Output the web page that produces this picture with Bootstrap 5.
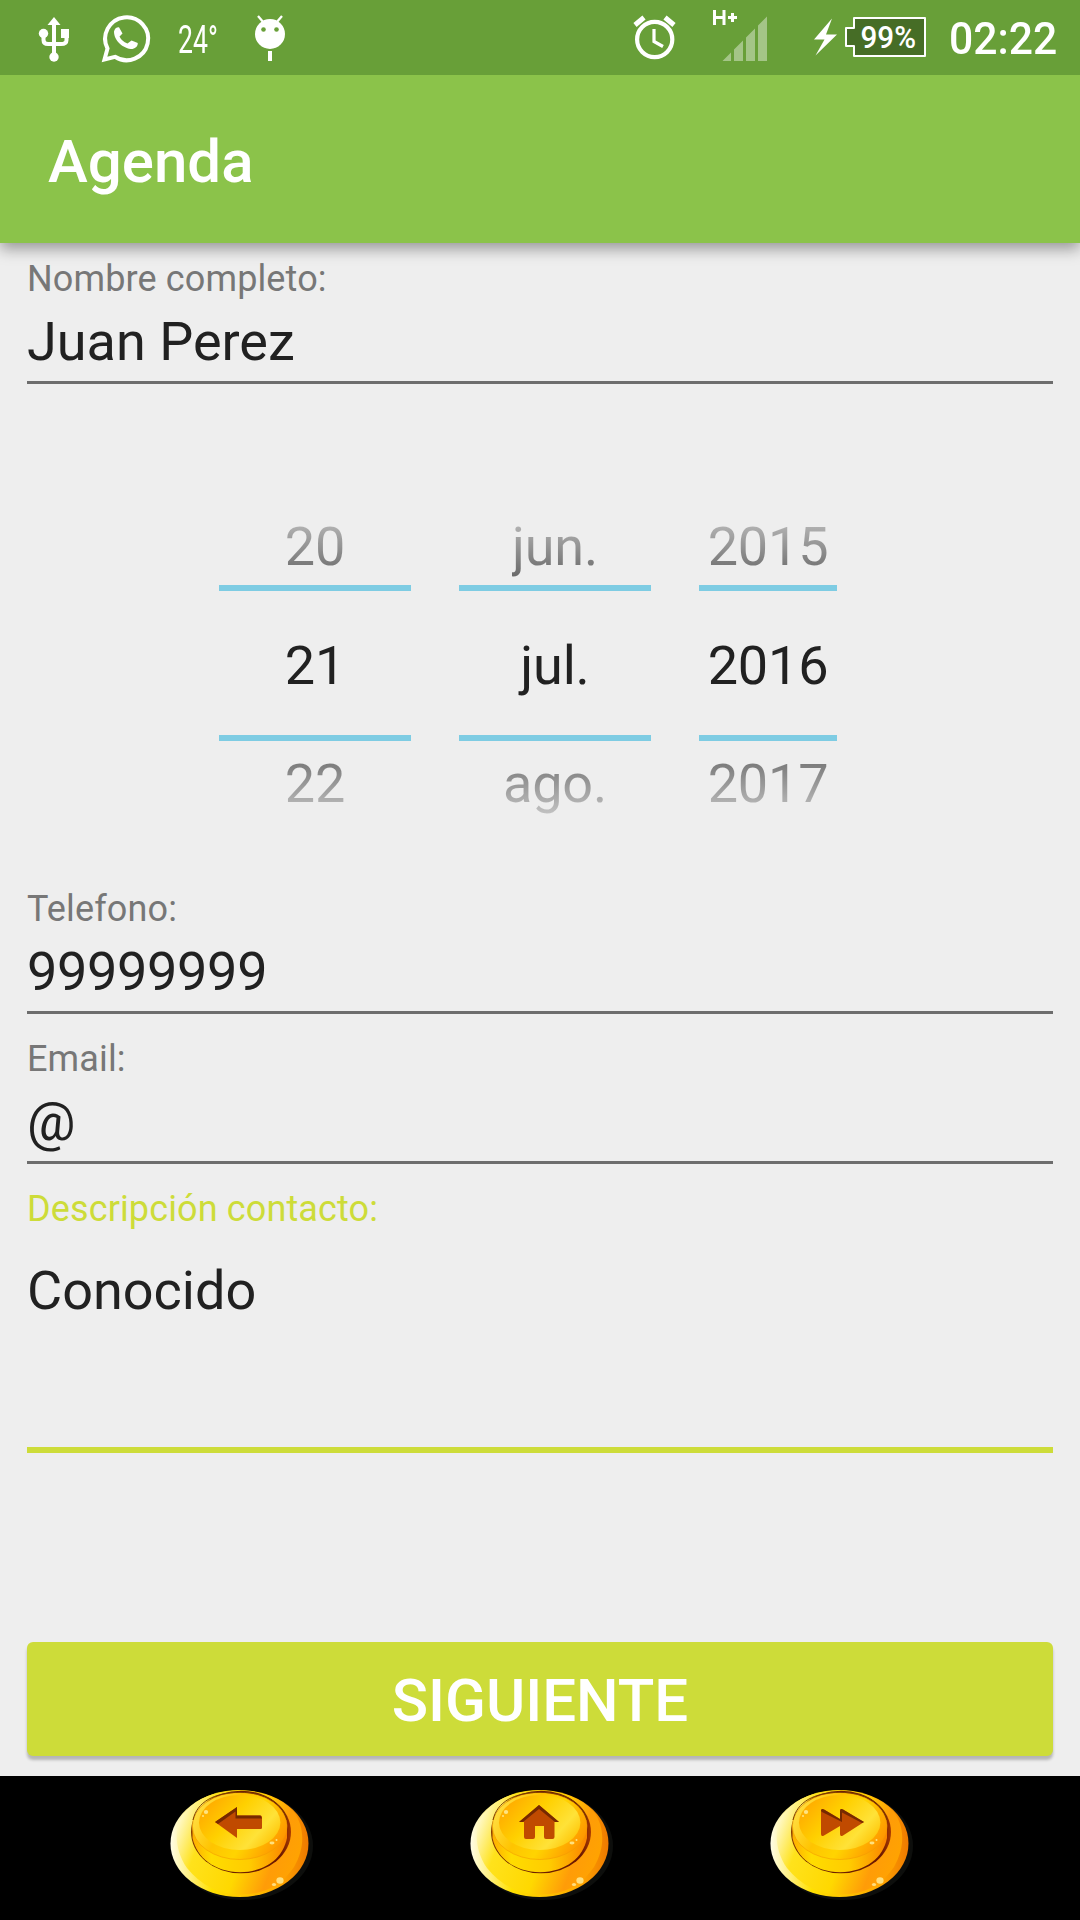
<!DOCTYPE html>
<html lang="es">
<head>
<meta charset="utf-8">
<meta name="viewport" content="width=device-width, initial-scale=1">
<title>Agenda</title>
<link href="https://cdn.jsdelivr.net/npm/bootstrap@5.3.0/dist/css/bootstrap.min.css" rel="stylesheet">
<style>
body{font-family:Roboto,sans-serif;background:#eee;color:#212121;width:1080px;height:1920px;overflow:hidden}
svg{display:block;flex:none}
.statusbar{height:75px;background:#689f38;color:#fff;z-index:3}
.temp{font-size:38px;line-height:75px;width:36px}
.temp span{display:inline-block;transform:scaleX(.7);transform-origin:0 50%;padding-top:3px}
.clock{font-size:44px;font-weight:500;line-height:75px;padding-top:2px}
.clock span{display:inline-block;transform:scaleX(.97);transform-origin:0 50%}
.appbar{height:168px;background:#8bc34a;padding-left:48px;box-shadow:0 6px 14px rgba(0,0,0,.36);z-index:2}
.appbar h1{font-size:60px;line-height:70px;font-weight:500;padding-top:6px}
.main-form{height:1533px;padding:0 27px}
.fld{height:150px;padding-top:15px}
.fld label{display:block;font-size:36px;line-height:42px;color:#777;letter-spacing:.13px}
.fld .form-control{font-size:54px;line-height:64px;height:84px;padding:2px 0 0;border:0;border-bottom:3px solid #6d6d6d;border-radius:0;background:transparent;color:#212121;box-shadow:none}
.fld .digits{letter-spacing:-.33px}
.first-field{height:141px}
.picker{height:489px;gap:48px;padding:100px 0 0 192px}
.wheel{width:192px;height:360px;font-size:54px;text-align:center;letter-spacing:-.2px}
.wheel.year{width:138px}
.wheel div{height:101px;line-height:64px}
.wheel .prev{padding-top:31px}
.wheel .sel{height:156px;border:solid #7ecce3;border-width:6px 0;padding-top:43px}
.wheel .next{padding-top:11px}
.wheel .prev span,.wheel .next span{display:inline-block;background-clip:text;-webkit-background-clip:text;color:transparent}
.wheel .prev span{background-image:linear-gradient(#c0c0c0,#666)}
.wheel .next span{background-image:linear-gradient(#6c6c6c,#c4c4c4)}
.fld.active{height:300px}
.fld.active label{color:#cddc39}
.fld.active .form-control{height:223px;border-bottom:6px solid #cddc39;padding-top:29px;resize:none;overflow:hidden}
.action{padding-top:169px}
.btn.btn-next{height:114px;background:#cddc39;color:#fff;font-size:60px;font-weight:500;line-height:60px;border:0;border-radius:6px;box-shadow:0 4px 3px rgba(0,0,0,.24);padding:4px 0 0}
.navbtns{height:144px;background:#000}
</style>
<script src="https://cdn.jsdelivr.net/npm/bootstrap@5.3.0/dist/js/bootstrap.bundle.min.js"></script>
</head>
<body class="d-flex flex-column">
<header class="statusbar d-flex flex-shrink-0 overflow-hidden position-relative">
  <svg width="178" height="75" viewBox="0 0 178 75" fill="none" stroke="#fff">
    <path d="M54 22V56M43.500 35V40Q43.500 44 48 44H61Q66.500 44 66.500 40V35" stroke-width="4"/>
    <path d="M54 17l6.500 8h-13z" fill="#fff" stroke="none"/><circle cx="43.500" cy="33.500" r="4.700" fill="#fff" stroke="none"/><circle cx="54" cy="57" r="4.700" fill="#fff" stroke="none"/><path d="M61 29h8v9h-8z" fill="#fff" stroke="none"/>
    <path d="M104.500 59.500l3-11A21.500 21.500 0 1 1 115 56.800z" stroke-width="4" stroke-linejoin="miter"/>
    <path d="M119 27.200Q115 27 114 31.500C114 41 123.500 49 132.500 49Q138 47.500 137.800 43L131.500 40.500L127.500 43.500Q121.500 41 119.500 36.500L122.500 33.500Z" fill="#fff" stroke="none"/>
  </svg>
  <div class="temp"><span>24°</span></div>
  <svg width="406" height="75" viewBox="214 0 406 75" fill="none" stroke="#fff"><circle cx="270" cy="34" r="15" fill="#fff" stroke="none"/><path d="M258 16l6 7M282 16l-6 7" stroke-width="2.300"/><path d="M270 51V61" stroke-width="4"/><g fill="#689f38" stroke="none"><circle cx="263.500" cy="29.500" r="2.300"/><circle cx="276.500" cy="29.500" r="2.300"/></g></svg>
  <svg width="329" height="75" viewBox="620 0 329 75" fill="none" stroke="#fff">
    <circle cx="654.700" cy="39.500" r="17.600" stroke-width="4.200"/><path d="M654 29V41.500L663 46.500" stroke-width="3.200"/><path d="M635 25l9-7.500M674 25l-9-7.500" stroke-width="5"/>
    <path d="M714.500 10V25M724 10V25M714.500 17.500h9.500M728 17.500h9M732.500 13v9" stroke-width="3"/>
    <path d="M722.500 61l8.500-8.500V61zM734 49.500l9-9V61h-9zM746 37.500l9-9V61h-9zM758 25.500l9-9V61h-9z" fill="#a4c587" stroke="none"/>
    <path d="M832 18.500L814 39.500h10.500L815.500 55.500L837 34.500H826z" fill="#fff" stroke="none"/>
    <path d="M854 18H925V56H854V46H846V28H854Z" fill="#466d26" stroke-width="2" stroke-linejoin="round"/>
    <text x="860.500" y="48" font-family="Roboto" font-size="32" font-weight="500" fill="#fff" stroke="none" textLength="55.500" lengthAdjust="spacingAndGlyphs">99%</text>
  </svg>
  <div class="clock"><span>02:22</span></div>
</header>
<nav class="appbar d-flex align-items-center flex-shrink-0 position-relative"><h1 class="text-white m-0">Agenda</h1></nav>
<main class="main-form flex-shrink-0">
  <div class="fld first-field"><label for="n">Nombre completo:</label><input id="n" class="form-control" value="Juan Perez"></div>
  <div class="picker d-flex">
    <div class="wheel"><div class="prev"><span>20</span></div><div class="sel">21</div><div class="next"><span>22</span></div></div>
    <div class="wheel"><div class="prev"><span>jun.</span></div><div class="sel">jul.</div><div class="next"><span>ago.</span></div></div>
    <div class="wheel year"><div class="prev"><span>2015</span></div><div class="sel">2016</div><div class="next"><span>2017</span></div></div>
  </div>
  <div class="fld"><label for="t">Telefono:</label><input id="t" class="form-control digits" value="99999999"></div>
  <div class="fld"><label for="e">Email:</label><input id="e" class="form-control" value="@"></div>
  <div class="fld active"><label for="d">Descripción contacto:</label><textarea id="d" class="form-control">Conocido</textarea></div>
  <div class="action"><button class="btn btn-next w-100">SIGUIENTE</button></div>
</main>
<footer class="navbtns d-flex flex-shrink-0 justify-content-center">
  <svg width="1080" height="144" viewBox="0 1776 1080 144">
    <defs>
      <linearGradient id="rim" x1="0" y1=".35" x2="1" y2=".65"><stop offset="0" stop-color="#fff9c8"/><stop offset=".2" stop-color="#ffe21c"/><stop offset=".55" stop-color="#ffd800"/><stop offset=".8" stop-color="#ff9c08"/><stop offset="1" stop-color="#ffa400"/></linearGradient>
      <linearGradient id="edge"><stop offset="0" stop-color="#fffde8"/><stop offset=".3" stop-color="#ffe000"/><stop offset=".8" stop-color="#ffa500"/><stop offset="1" stop-color="#ee7900"/></linearGradient>
      <linearGradient id="side"><stop offset="0" stop-color="#ffae00"/><stop offset=".2" stop-color="#ffdc00"/><stop offset=".6" stop-color="#ffcc00"/><stop offset="1" stop-color="#fb8500"/></linearGradient>
      <linearGradient id="well"><stop offset="0" stop-color="#8a3c00"/><stop offset=".08" stop-color="#6d2600"/><stop offset=".9" stop-color="#6d1800"/><stop offset="1" stop-color="#a93a00"/></linearGradient>
      <linearGradient id="ring" x1="0" y1=".3" x2="1" y2=".7"><stop offset="0" stop-color="#ffdf45"/><stop offset=".35" stop-color="#ffc400"/><stop offset=".6" stop-color="#ffd400"/><stop offset="1" stop-color="#ff9000"/></linearGradient>
      <linearGradient id="face" x1="0" y1=".2" x2="1" y2=".8"><stop offset="0" stop-color="#ffa600"/><stop offset=".4" stop-color="#ffd000"/><stop offset=".75" stop-color="#ffe238"/><stop offset="1" stop-color="#ffc000"/></linearGradient>
      <g id="knob">
        <ellipse cx="93" cy="76" rx="70" ry="54" fill="#0d0e0c"/>
        <ellipse cx="89.500" cy="73.500" rx="69" ry="53.500" fill="url(#edge)"/>
        <path d="M36 41C24 53 23 78 37 98Q58 124 90 124.500Q125 125 144 97C156 76 154 56 144 42Q124 21 89 20.500Q54 21 36 41Z" fill="url(#rim)"/>
        <ellipse cx="91" cy="62" rx="50" ry="41.300" fill="url(#well)"/>
        <path d="M42.500 54V68C47 88 64 101.500 90 102.300C116 101.500 133 88 137 68V54Z" fill="url(#side)"/>
        <ellipse cx="89.700" cy="56" rx="47.300" ry="33.500" fill="url(#ring)" stroke="#f39a00" stroke-width=".6"/>
        <path d="M43 50C47 32 64 22.500 90 22.300C116 22.500 132 33 137 50" fill="none" stroke="#7b3c00" stroke-width="1"/>
        <ellipse cx="89.700" cy="52.500" rx="40.700" ry="27.500" fill="url(#face)"/>
        <g fill="#fff0a0" opacity=".8"><ellipse cx="56" cy="42" rx="2.200" ry="2"/><circle cx="53" cy="46" r="1"/><ellipse cx="122" cy="73" rx="2.500" ry="1.400"/><circle cx="126.500" cy="70" r="1"/><ellipse cx="130" cy="110.500" rx="3.600" ry="3.200"/><ellipse cx="124" cy="114.500" rx="2.100" ry="1.600"/></g>
      </g>
    </defs>
    <use href="#knob" x="150" y="1770"/><use href="#knob" x="450" y="1770"/><use href="#knob" x="750" y="1770"/>
    <g fill="#c04a00">
      <path d="M215 1822L237 1807V1815.500H260.500Q262 1815.500 262 1817V1828Q262 1829 260.500 1829H237V1838Z"/><path d="M215 1822L237 1807V1815.500H260.500L262 1818.500H235.500V1811.500L218 1824Z" fill="#762900"/>
      <path d="M519 1822L539 1805L559 1822H554.500V1837Q554.500 1839 552.500 1839H546Q544 1839 544 1837V1826H535V1837Q535 1839 533 1839H526Q524 1839 524 1837V1822Z"/><path d="M519 1822L539 1805L559 1822H555L539 1809L523 1822Z" fill="#762900"/>
      <path d="M821 1811Q821 1808 824 1809.500L840 1819V1811Q840 1808 843 1809.500L864 1822L843 1835.500Q840 1837 840 1834V1826L824 1835.500Q821 1837 821 1834Z"/><path d="M821 1811Q821 1808 824 1809.500L840 1819V1811Q840 1808 843 1809.500L864 1822L862 1823L842 1812.500V1822L822 1812Z" fill="#762900"/>
    </g>
  </svg>
</footer>
</body>
</html>
